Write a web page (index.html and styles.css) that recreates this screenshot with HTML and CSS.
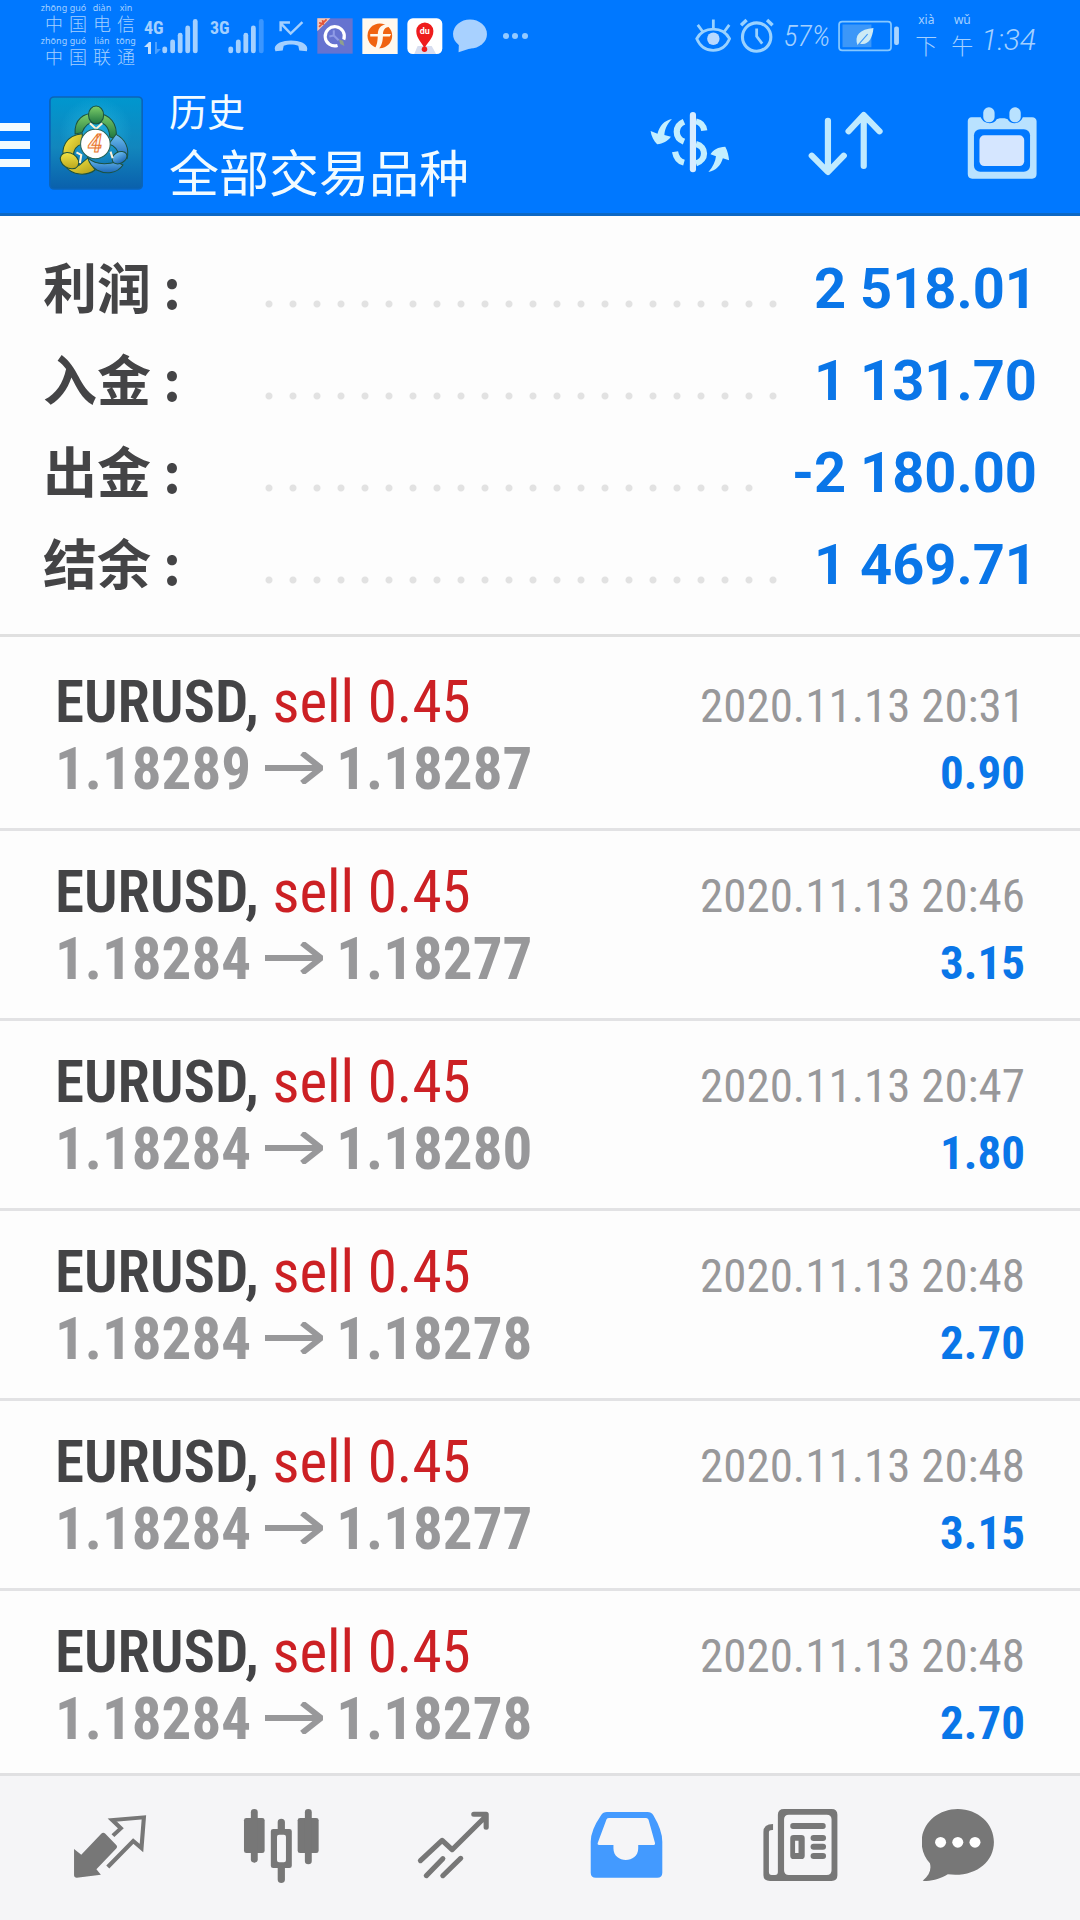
FILE: index.html
```html
<!DOCTYPE html>
<html lang="zh-CN">
<head>
<meta charset="utf-8">
<meta name="viewport" content="width=device-width, initial-scale=1">
<title>历史</title>
<link rel="stylesheet" href="styles.css">
</head>
<body>
<header class="header">
  <div class="status">
    <div class="carriers">
      <div class="carrier"><ruby>中<rt>zhōng</rt></ruby><ruby>国<rt>guó</rt></ruby><ruby>电<rt>diàn</rt></ruby><ruby>信<rt>xìn</rt></ruby></div>
      <div class="carrier"><ruby>中<rt>zhōng</rt></ruby><ruby>国<rt>guó</rt></ruby><ruby>联<rt>lián</rt></ruby><ruby>通<rt>tōng</rt></ruby></div>
    </div>
    <div class="network">
      <div class="network-type"><span>4G</span>
        <svg width="18" height="12" viewBox="0 0 18 12"><path d="M0 5 5 0h2v12H4V5z" fill="#c4e0ff"/><path d="M11 0h2v7h4l-5 5h-1z" fill="#4aa0ff"/></svg>
      </div>
      <svg width="36" height="36" viewBox="468 54 105 105" fill="#a4d0ff"><rect x="469" y="137" width="14" height="20" rx="7"/><rect x="492" y="117" width="14" height="40" rx="7"/><rect x="514" y="97" width="14" height="60" rx="7"/><rect x="536" y="76" width="14" height="81" rx="7"/><rect x="558" y="57" width="14" height="100" rx="7"/></svg>
    </div>
    <div class="network">
      <div class="network-type"><span>3G</span></div>
      <svg width="36" height="36" viewBox="658 54 105 105" fill="#a4d0ff"><rect x="659" y="137" width="14" height="20" rx="7"/><rect x="681" y="117" width="14" height="40" rx="7"/><rect x="703" y="97" width="14" height="60" rx="7"/><rect x="725" y="76" width="14" height="81" rx="7"/><rect x="748" y="57" width="14" height="100" rx="7" fill="#3a96ff"/></svg>
    </div>
    <div class="notices">
      <svg width="34" height="36" viewBox="795 57 98 104" fill="none" stroke="#a4d0ff" stroke-width="7"><path d="M877 69 843 102 816 74M814 95V70h27"/><path d="M797 146c0-32 94-32 94 0l-1 7-22-2-3-14c-12-5-30-5-42 0l-3 14-21 2z" fill="#a4d0ff" stroke="none"/></svg>
      <svg width="36" height="36" viewBox="922 56 105 105"><rect x="923" y="57" width="103" height="103" fill="#6673d0"/><path d="M923 57h38l-38 38z" fill="#f4c8b8"/><path d="m928 82 22-22M928 70l10 2M938 62l3 14" stroke="#e25538" stroke-width="5"/><path d="M982 136a28 28 0 1 1 18-17" fill="none" stroke="#fff" stroke-width="9"/><path d="M971 92v15l-13 3M971 107l14 14" stroke="#8f9be6" stroke-width="6" fill="none"/><path d="m986 119 12 3 4 16-12-6z" fill="#8fa08c"/></svg>
      <svg width="36" height="36" viewBox="1053 56 105 105"><rect x="1054" y="57" width="103" height="104" fill="#fff8ee"/><circle cx="1105" cy="108" r="36" fill="#f06310"/><path d="M1088 148c8-10 10-20 11-38h-22v-7h22c1-21 13-31 43-30v8c-20 0-27 7-28 22h24l-4 7h-20c-1 20-6 32-15 38z" fill="#fff8ee"/></svg>
      <svg width="36" height="36" viewBox="1184 56 105 105"><rect x="1185" y="57" width="102" height="104" rx="16" fill="#fff"/><path d="m1205 161 10-23h41l13 23z" fill="#d7ddef"/><path d="M1235 146c-4-16-24-28-24-52a25 25 0 0 1 50 0c0 24-22 36-26 52z" fill="#ee1c1c"/><circle cx="1235" cy="147" r="8" fill="#ee1c1c"/><text x="1236" y="104" class="pin-text">du</text></svg>
      <svg width="36" height="36" viewBox="1316 59 104 104" fill="#a8d1ff"><ellipse cx="1368" cy="105" rx="49" ry="42"/><path d="m1336 132-1 26 42-14z"/></svg>
      <svg width="28" height="8" viewBox="0 0 28 8" fill="#94caff"><circle cx="5" cy="4" r="3"/><circle cx="14" cy="4" r="3"/><circle cx="24" cy="4" r="3"/></svg>
    </div>
    <div class="status-right">
      <svg width="36" height="36" viewBox="455 59 104 104" fill="none" stroke="#9ad2ff" stroke-width="8"><path d="M460 119c20-37 75-37 95 0-20 45-75 45-95 0z"/><path d="M508 63v25M463 79l14 19M554 79l-14 19"/><circle cx="508" cy="119" r="18" fill="#b9d9ff" stroke="none"/></svg>
      <svg width="36" height="36" viewBox="592 58 104 104" fill="none" stroke="#9ad2ff"><circle cx="643" cy="113" r="41" stroke-width="9"/><path d="M643 88v23l16 21" stroke-width="8"/><path d="m598 79 16-15M689 79l-16-15" stroke-width="10"/></svg>
      <span class="battery-level">57%</span>
      <svg width="62" height="32" viewBox="867 63 180 93"><rect x="870" y="68" width="151" height="83" rx="9" fill="none" stroke="#86c8ff" stroke-width="5"/><rect x="880" y="76" width="84" height="66" fill="#3c97f8"/><path d="M924 137c-11-30 6-47 46-51-3 33-17 52-40 45z" fill="#cdeaf5"/><path d="m923 138 30-34" stroke="#3c97f8" stroke-width="3"/><rect x="1030" y="82" width="14" height="54" rx="6" fill="#a8d4ff"/></svg>
      <div class="clock"><ruby>下<rt>xià</rt></ruby><ruby>午<rt>wǔ</rt></ruby><span>1:34</span></div>
    </div>
  </div>
  <div class="appbar">
    <button class="menu" aria-label="菜单"><svg width="30" height="44" viewBox="0 0 30 44" fill="#f2fbff"><path d="M0 0h30v8H0zM0 18h30v8H0zM0 36h30v8H0z"/></svg></button>
    <svg class="logo" width="94" height="94" viewBox="49 97 94 94">
      <defs>
        <linearGradient id="sky" x1="0" y1="0" x2="0" y2="1"><stop offset="0" stop-color="#0097cf"/><stop offset=".55" stop-color="#1286bd"/><stop offset="1" stop-color="#0a60ac"/></linearGradient>
        <radialGradient id="glow"><stop offset="0" stop-color="#35c5e8"/><stop offset="1" stop-color="#35c5e8" stop-opacity="0"/></radialGradient>
        <linearGradient id="green" x1="0" y1="0" x2="0" y2="1"><stop offset="0" stop-color="#7fd06a"/><stop offset="1" stop-color="#1d7440"/></linearGradient>
        <linearGradient id="yellow" x1="0" y1="0" x2="1" y2="1"><stop offset="0" stop-color="#fff04c"/><stop offset="1" stop-color="#ad9a16"/></linearGradient>
        <linearGradient id="blue" x1="0" y1="0" x2="0" y2="1"><stop offset="0" stop-color="#6fc0f0"/><stop offset="1" stop-color="#1b67b8"/></linearGradient>
      </defs>
      <g transform="scale(.3444 .3333)">
        <rect x="145" y="294" width="268" height="276" rx="12" fill="url(#sky)" stroke="#0b64b8" stroke-width="5"/>
        <circle cx="278" cy="400" r="105" fill="url(#glow)" opacity=".6"/>
        <g stroke="#1c5240" stroke-width="3">
          <path d="M218 405c-3-45 25-64 61-62 40 2 64 30 58 77l-18-6c-2-33-20-46-40-46-22 0-33 11-41 33z" fill="url(#green)"/>
          <path d="M239 404c-50 5-62 43-54 78l28-9c0-22 10-34 26-38z" fill="url(#yellow)"/>
          <path d="M188 500c23 32 64 31 88 13l-21-36-25 22z" fill="url(#yellow)"/>
          <path d="M337 406c27 14 39 42 32 73l-23-6c-2-20-12-32-30-38z" fill="url(#blue)"/>
          <path d="M255 477c20 19 47 22 84 12l18 9c-17 26-50 29-76 15-13-8-22-20-26-36z" fill="url(#blue)"/>
          <ellipse cx="279" cy="348" rx="22" ry="27" fill="url(#green)"/>
          <ellipse cx="202" cy="485" rx="29" ry="22" transform="rotate(35 202 485)" fill="url(#yellow)"/>
          <ellipse cx="347" cy="476" rx="23" ry="17" transform="rotate(-30 347 476)" fill="url(#blue)"/>
        </g>
        <path d="m261 373 18 17 18-17M222 460l14 8-4 24M327 478l-6-20" fill="none" stroke="#fff2d8" stroke-width="6"/>
        <ellipse cx="277" cy="435" rx="43" ry="44" fill="#fff" stroke="#26645a" stroke-width="3"/>
      </g>
      <text x="95" y="153" class="logo-text">4</text>
    </svg>
    <div class="titles">
      <h1>历史</h1>
      <p>全部交易品种</p>
    </div>
    <button class="action" aria-label="货币"><svg width="96" height="96" viewBox="296 285 279 288" preserveAspectRatio="none" fill="none" stroke="#c4efff" stroke-width="18"><path d="M444 345v163" stroke-linecap="round" stroke="#d8ecff"/><path d="M418 365c-28 12-28 49 0 60M418 488c-15-4-23-15-26-33M453 364c15 3 22 12 24 28M453 432c31 8 31 48 0 58"/><g fill="#c4efff" stroke="none"><path d="m383 357c-15 16-21 32-22 48l19 5c-10 14-23 20-40 23-10-11-17-25-19-40l20 8c7-25 18-38 42-44z"/><path d="M489 516c14-16 20-31 22-47l-16-6c8-14 22-22 43-23 7 13 10 27 11 41l-18-6c-7 23-19 36-42 41z"/></g></svg></button>
    <button class="action" aria-label="排序"><svg width="96" height="96" viewBox="749 285 279 288" preserveAspectRatio="none" fill="none" stroke="#bfeaff" stroke-width="18" stroke-linecap="round" stroke-linejoin="round"><path d="M836 362v153M789 467l47 49 46-49M940 498V346M896 394l44-49 46 49"/></svg></button>
    <button class="action" aria-label="日历"><svg width="96" height="96" viewBox="1202 285 279 288" preserveAspectRatio="none"><path d="M1253 352h27c8 22 38 23 46 6l9-3 14 0 9 3c8 17 36 16 44-6h27c8 0 13 5 13 12v158c0 9-5 14-13 14h-174c-8 0-13-5-13-14V364c0-7 4-12 11-12z" fill="#b9e2ff"/><rect x="1260" y="388" width="163" height="127" rx="18" fill="#0078ff"/><rect x="1276" y="406" width="130" height="92" rx="14" fill="#d5e6ff"/><g fill="#b9e2ff"><rect x="1287" y="322" width="33" height="45" rx="16"/><rect x="1363" y="322" width="33" height="45" rx="16"/></g></svg></button>
  </div>
</header>

<main class="content">
  <dl class="summary">
    <div class="sum-row"><dt>利润 :</dt><dd>2 518.01</dd></div>
    <div class="sum-row"><dt>入金 :</dt><dd>1 131.70</dd></div>
    <div class="sum-row"><dt>出金 :</dt><dd>-2 180.00</dd></div>
    <div class="sum-row"><dt>结余 :</dt><dd>1 469.71</dd></div>
  </dl>
  <svg width="0" height="0" aria-hidden="true"><symbol id="arrow" viewBox="0 0 58 32"><path d="M0 16h56M37 1l19 15-19 15" fill="none" stroke="#98989a" stroke-width="6"/></symbol></svg>
  <ul class="deals">
    <li class="deal">
      <div class="line"><span class="symbol">EURUSD, <span class="side">sell 0.45</span></span><time>2020.11.13 20:31</time></div>
      <div class="line"><span class="prices">1.18289 <svg class="arrow" role="img" aria-label="至"><use href="#arrow"/></svg> 1.18287</span><span class="profit">0.90</span></div>
    </li>
    <li class="deal">
      <div class="line"><span class="symbol">EURUSD, <span class="side">sell 0.45</span></span><time>2020.11.13 20:46</time></div>
      <div class="line"><span class="prices">1.18284 <svg class="arrow" role="img" aria-label="至"><use href="#arrow"/></svg> 1.18277</span><span class="profit">3.15</span></div>
    </li>
    <li class="deal">
      <div class="line"><span class="symbol">EURUSD, <span class="side">sell 0.45</span></span><time>2020.11.13 20:47</time></div>
      <div class="line"><span class="prices">1.18284 <svg class="arrow" role="img" aria-label="至"><use href="#arrow"/></svg> 1.18280</span><span class="profit">1.80</span></div>
    </li>
    <li class="deal">
      <div class="line"><span class="symbol">EURUSD, <span class="side">sell 0.45</span></span><time>2020.11.13 20:48</time></div>
      <div class="line"><span class="prices">1.18284 <svg class="arrow" role="img" aria-label="至"><use href="#arrow"/></svg> 1.18278</span><span class="profit">2.70</span></div>
    </li>
    <li class="deal">
      <div class="line"><span class="symbol">EURUSD, <span class="side">sell 0.45</span></span><time>2020.11.13 20:48</time></div>
      <div class="line"><span class="prices">1.18284 <svg class="arrow" role="img" aria-label="至"><use href="#arrow"/></svg> 1.18277</span><span class="profit">3.15</span></div>
    </li>
    <li class="deal">
      <div class="line"><span class="symbol">EURUSD, <span class="side">sell 0.45</span></span><time>2020.11.13 20:48</time></div>
      <div class="line"><span class="prices">1.18284 <svg class="arrow" role="img" aria-label="至"><use href="#arrow"/></svg> 1.18278</span><span class="profit">2.70</span></div>
    </li>
  </ul>
</main>

<nav class="tabs">
  <button class="tab" aria-label="行情"><svg width="96" height="96" viewBox="180 180 279 288" preserveAspectRatio="none"><path d="M215 327l21 17 58-63c4-4 8-4 12 0l31 33c4 4 4 8 0 12l-57 62 13 16-70 9c-5 0-8-2-8-7z" fill="#777"/><path d="m328 287 23-22-25-25 92-8-7 92-24-21-74 78" fill="none" stroke="#777" stroke-width="12" stroke-linejoin="miter"/></svg></button>
  <button class="tab" aria-label="图表"><svg width="96" height="96" viewBox="680 180 279 288" preserveAspectRatio="none" fill="#777"><rect x="709" y="234" width="60" height="105" rx="7"/><rect x="729" y="207" width="20" height="161" rx="10"/><rect x="865" y="234" width="61" height="105" rx="7"/><rect x="886" y="207" width="20" height="166" rx="10"/><path fill-rule="evenodd" d="M794 267h13v-21c0-13 21-13 21 0v21h13q7 0 7 7v103q0 7-7 7h-13v35c0 13-21 13-21 0v-35h-13q-7 0-7-7V274q0-7 7-7zm17 17q-6 0-6 6v71q0 6 6 6h14q6 0 6-6v-71q0-6-6-6z"/></svg></button>
  <button class="tab" aria-label="交易"><svg width="96" height="96" viewBox="1179 180 279 288" preserveAspectRatio="none" fill="none" stroke="#777" stroke-width="15" stroke-linecap="round" stroke-linejoin="round"><path d="m1221 362 63-61 29 28 96-98M1376 223h36v39M1238 407l48-51M1286 407l52-52"/></svg></button>
  <button class="tab" aria-label="历史" aria-current="page"><svg width="96" height="96" viewBox="111 180 279 288" preserveAspectRatio="none"><path fill-rule="evenodd" d="M195 216h118q11 0 17 10 26 45 26 79v93q0 15-15 15H163q-15 0-15-15v-93q0-34 30-79 6-10 17-10zm6 18q-5 0-7 4l-26 72q-1 5 4 5h42v10c0 47 72 47 72 0v-10h45q5 0 4-5l-19-71q-2-5-7-5z" fill="#439aff"/></svg></button>
  <button class="tab" aria-label="新闻"><svg width="96" height="96" viewBox="609 180 279 288" preserveAspectRatio="none"><path fill-rule="evenodd" d="M708 207h138q17 0 17 17v182q0 17-17 17H667q-19 0-19-17V276q0-24 28-24v18q-12-1-12 7v119q0 9 8 9h10q8 0 8-9V224q0-17 18-17zm14 17q-14 0-14 14v153q0 14 14 14h110q14 0 14-14V238q0-14-14-14z" fill="#777"/><path fill-rule="evenodd" d="M736 285h22q10 0 10 10v52q0 10-10 10h-22q-10 0-10-10v-52q0-10 10-10zm4 17v37h10v-37z" fill="#777"/><g fill="#777"><rect x="726" y="249" width="103" height="18" rx="8"/><rect x="785" y="285" width="45" height="18" rx="9"/><rect x="785" y="311" width="45" height="18" rx="9"/><rect x="785" y="339" width="45" height="18" rx="9"/></g></svg></button>
  <button class="tab" aria-label="消息"><svg width="96" height="96" viewBox="1109 180 279 288" preserveAspectRatio="none"><path d="M1213 207c58 0 105 43 105 99 0 63-57 107-134 97-23 14-46 22-73 19 19-16 26-33 21-52-15-17-24-39-24-64 0-56 47-99 105-99z" fill="#777"/><g fill="#fff"><circle cx="1163" cy="307" r="16"/><circle cx="1213" cy="307" r="16"/><circle cx="1263" cy="307" r="16"/></g></svg></button>
</nav>
</body>
</html>
```
FILE: styles.css
```css
* { box-sizing: border-box; }

body {
  margin: 0;
  height: 100vh;
  display: flex;
  flex-direction: column;
  background: #fdfdfd;
  font-family: "Roboto", "Noto Sans CJK SC", sans-serif;
}

h1, p, dl, dd, ul { margin: 0; padding: 0; }
button { padding: 0; border: 0; background: none; }
svg { display: block; flex: none; }

/* Header */
.header {
  flex: none;
  background: #0078ff;
  border-bottom: 3px solid #0d68c4;
}

.status {
  display: flex;
  align-items: center;
  height: 72px;
  padding: 0 44px 0 42px;
  color: #a4d0ff;
}

.carrier { display: flex; height: 33px; }

ruby {
  display: flex;
  flex-direction: column-reverse;
  justify-content: flex-end;
  align-items: center;
}
rt { display: block; }

.carrier ruby {
  width: 24px;
  font: 300 18px/20px "Noto Sans CJK SC", sans-serif;
}
.carrier rt { font: 9px/10px "Noto Sans", sans-serif; white-space: nowrap; }

.network { display: flex; height: 36px; margin-left: 6px; }
.network + .network { margin-left: 12px; }
.network-type {
  width: 18px;
  display: flex;
  flex-direction: column;
  justify-content: space-between;
  font: 700 18px/20px "Roboto Condensed", sans-serif;
}

.notices {
  display: flex;
  align-items: center;
  gap: 9px;
  margin-left: 10px;
}
.notices svg:last-child { margin-left: 4px; }
.pin-text {
  fill: #fff;
  font: 700 26px "Roboto", sans-serif;
  text-anchor: middle;
}

.status-right {
  display: flex;
  align-items: center;
  gap: 8px;
  margin-left: auto;
}
.battery-level { font: italic 300 30px/36px "Roboto Condensed", sans-serif; }
.clock { display: flex; }
.clock ruby {
  width: 36px;
  font: 300 22px/32px "Noto Sans CJK SC", sans-serif;
}
.clock rt { font: 12px/16px "Noto Sans", sans-serif; }
.clock span {
  padding: 14px 0 0 1px;
  font: italic 300 30px/28px "Roboto", sans-serif;
}

.appbar { display: flex; align-items: center; height: 141px; }
.menu { padding-top: 4px; }
.logo { margin-left: 19px; }
.logo-text {
  fill: #fff3e6;
  stroke: #e8742c;
  stroke-width: 1px;
  font: italic 700 25px "Roboto", sans-serif;
  text-anchor: middle;
}
.titles {
  flex: 1;
  margin-left: 26px;
  color: #f2fbff;
  font-family: "Noto Sans CJK SC", sans-serif;
}
.titles h1 { font-size: 38px; font-weight: 400; line-height: 54px; }
.titles p { font-size: 50px; line-height: 66px; }
.action {
  width: 156px;
  height: 120px;
  display: grid;
  place-items: center;
}

/* Account summary */
.content { flex: 1; min-height: 0; overflow: hidden; }

.summary { padding: 27px 43px 23px; border-bottom: 3px solid #e0e0e0; }
.sum-row {
  display: flex;
  height: 92px;
  line-height: 92px;
}
.sum-row dt {
  width: 214px;
  color: #444446;
  font: 700 54px/86px "Noto Sans CJK SC", sans-serif;
}
.sum-row dd {
  flex: 1;
  display: flex;
  color: #0a76e8;
  font-size: 56px;
  font-weight: 700;
}
/* Dotted leader between the label and the amount */
.sum-row dd::before {
  content: "";
  flex: 1;
  margin-right: 28px;
  background: radial-gradient(circle at 12px 61px, #e2e2e2 3px, transparent 4px) repeat-x 0 0 / 24px 92px;
}

/* Deals */
.deals {
  padding-top: 4px;
  list-style: none;
  font-family: "Roboto Condensed", sans-serif;
}
.deal {
  height: 190px;
  padding: 27px 55px 0;
  border-bottom: 3px solid #e2e2e4;
}
.line {
  display: flex;
  justify-content: space-between;
  align-items: baseline;
  height: 67px;
  line-height: 67px;
}
.symbol { color: #444446; font-size: 59px; font-weight: 600; }
.side { color: #cc2024; font-weight: 400; }
.prices { color: #98989a; font-size: 59px; font-weight: 700; }
.arrow { display: inline-block; width: 58px; height: 32px; vertical-align: 5px; }
time { color: #98989a; font-size: 47px; }
.profit { color: #0a76e8; font-size: 47px; font-weight: 700; }

/* Bottom tabs */
.tabs {
  flex: none;
  display: flex;
  padding: 0 24px;
  background: #f5f5f7;
  border-top: 3px solid #e0e0e2;
}
.tab {
  flex: 1;
  height: 144px;
  display: grid;
  place-items: center;
}
```
